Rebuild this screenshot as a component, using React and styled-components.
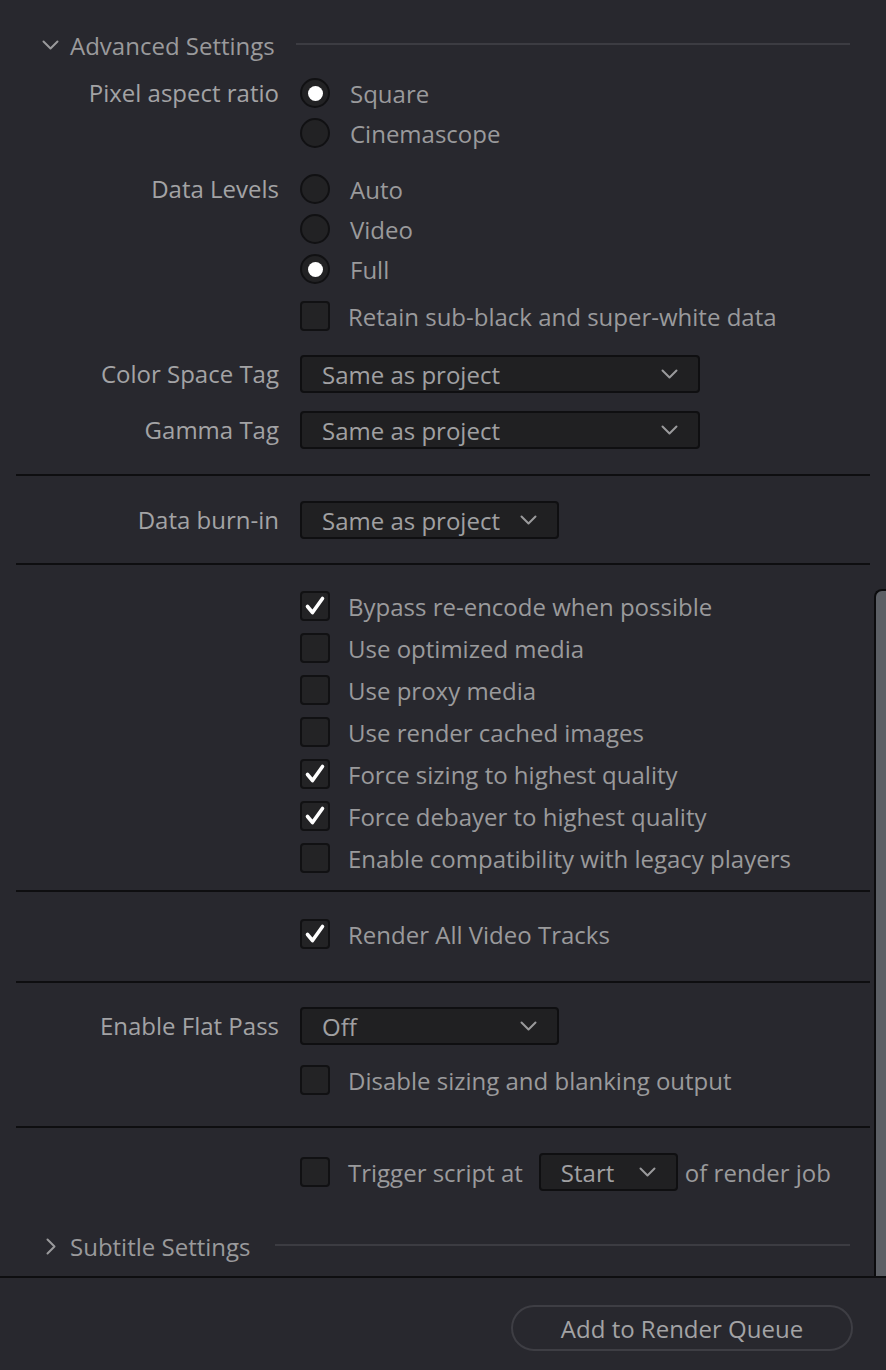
import React from "react";
import styled, { createGlobalStyle } from "styled-components";

const Global = createGlobalStyle`
  html, body { margin: 0; padding: 0; background: #28282e; }
  body { font-family: "Open Sans", "Noto Sans", sans-serif; }
  * { box-sizing: border-box; }
`;

const Page = styled.div`
  width: 886px;
  height: 1370px;
  background: #28282e;
  display: flex;
  flex-direction: column;
  overflow: hidden;
  color: #9d9d9f;
  font-size: 24px;
`;

const Panel = styled.div`
  position: relative;
  height: 1276px;
  padding: 25px 16px 10px 16px;
  display: flex;
  flex-direction: column;
`;

const ScrollThumb = styled.div`
  position: absolute;
  left: 874px;
  top: 589px;
  width: 20px;
  bottom: 0;
  background: #5c5f65;
  border-left: 2px solid #0c0c0e;
  border-top: 2px solid #0c0c0e;
  border-top-left-radius: 8px;
`;

const SectionHeader = styled.div`
  display: flex;
  align-items: center;
  height: 40px;
  margin-top: ${(p) => p.$mt || 0}px;
  padding-left: ${(p) => p.$pl}px;
  padding-right: 20px;
  gap: ${(p) => p.$gap || 12}px;
`;

const HeaderTitle = styled.span`
  color: #9a9a9c;
  white-space: nowrap;
`;

const HeaderLine = styled.div`
  flex: 1;
  height: 2px;
  background: #3c3c42;
  margin-left: ${(p) => p.$ml}px;
  margin-top: -2px;
`;

const Row = styled.div`
  display: grid;
  grid-template-columns: 263px 1fr;
  column-gap: 21px;
  align-items: start;
  margin-top: ${(p) => p.$mt || 0}px;
`;

const Label = styled.div`
  text-align: right;
  color: #a3a3a5;
  white-space: nowrap;
  height: ${(p) => p.$h || 40}px;
  line-height: ${(p) => p.$h || 40}px;
`;

const Controls = styled.div`
  display: flex;
  flex-direction: column;
`;

const OptionRow = styled.div`
  display: flex;
  align-items: center;
  height: ${(p) => p.$h || 40}px;
  gap: ${(p) => p.$gap || 18}px;
  margin-top: ${(p) => p.$mt || 0}px;
  white-space: nowrap;
`;

const OptionText = styled.span`
  color: #9a9a9c;
  margin-left: ${(p) => p.$ml || 0}px;
  margin-right: ${(p) => p.$mr || 0}px;
`;

const RadioOuter = styled.span`
  width: 30px;
  height: 30px;
  border-radius: 50%;
  background: #222224;
  border: 2px solid #111113;
  display: flex;
  align-items: center;
  justify-content: center;
  flex: none;
`;

const RadioDot = styled.span`
  width: 15px;
  height: 15px;
  border-radius: 50%;
  background: #ffffff;
`;

const Box = styled.span`
  width: 30px;
  height: 30px;
  border-radius: 4px;
  background: #232325;
  border: 2px solid #111113;
  display: flex;
  align-items: center;
  justify-content: center;
  flex: none;
`;

const SelectBox = styled.div`
  width: ${(p) => p.$w}px;
  height: 38px;
  background: #202022;
  border: 2px solid #0f0f11;
  border-radius: 4px;
  display: flex;
  align-items: center;
  justify-content: space-between;
  padding: 0 ${(p) => p.$pr || 20}px 0 20px;
  color: #a0a0a2;
  flex: none;
`;

const SelectText = styled.span`
  white-space: nowrap;
`;

const Divider = styled.div`
  height: 2px;
  background: #0e0e10;
  margin-top: ${(p) => p.$mt || 0}px;
`;

const Inline = styled.div`
  display: flex;
  align-items: center;
  height: 38px;
  white-space: nowrap;
`;

const Footer = styled.div`
  flex: 1;
  border-top: 2px solid #0e0e10;
  display: flex;
  justify-content: flex-end;
  align-items: flex-start;
  padding: 27px 33px 0 0;
`;

const QueueButton = styled.button`
  width: 342px;
  height: 46px;
  border-radius: 23px;
  border: 2px solid #3e3e44;
  background: transparent;
  color: #a3a3a5;
  font-family: inherit;
  font-size: 24px;
  padding: 0;
`;

const Check = () => (
  <svg width="22" height="22" viewBox="0 0 22 22">
    <path d="M3.5 11.5 L8.5 17.5 L18.5 3.5" fill="none" stroke="#fff" strokeWidth="3.6" strokeLinecap="round" strokeLinejoin="round" />
  </svg>
);

const ChevronDown = ({ color = "#9a9a9c", w = 17 }) => (
  <svg width={w} height="10" viewBox="0 0 17 10">
    <path d="M1.5 1.5 L8.5 8.5 L15.5 1.5" fill="none" stroke={color} strokeWidth="2" strokeLinecap="round" strokeLinejoin="round" />
  </svg>
);

const ChevronRight = () => (
  <svg width="10" height="17" viewBox="0 0 10 17">
    <path d="M1.5 1.5 L8.5 8.5 L1.5 15.5" fill="none" stroke="#9a9a9c" strokeWidth="2" strokeLinecap="round" strokeLinejoin="round" />
  </svg>
);

const Radio = ({ on, children }) => (
  <OptionRow $gap={20}>
    <RadioOuter>{on && <RadioDot />}</RadioOuter>
    <OptionText>{children}</OptionText>
  </OptionRow>
);

const CheckItem = ({ on, children, h = 42, mt }) => (
  <OptionRow $h={h} $gap={18} $mt={mt}>
    <Box>{on && <Check />}</Box>
    <OptionText>{children}</OptionText>
  </OptionRow>
);

const Select = ({ w, value, pr }) => (
  <SelectBox $w={w} $pr={pr}>
    <SelectText>{value}</SelectText>
    <ChevronDown />
  </SelectBox>
);

const renderChecks = [
  ["Bypass re-encode when possible", true],
  ["Use optimized media", false],
  ["Use proxy media", false],
  ["Use render cached images", false],
  ["Force sizing to highest quality", true],
  ["Force debayer to highest quality", true],
  ["Enable compatibility with legacy players", false],
];

export default function App() {
  return (
    <Page>
      <Global />
      <Panel>
        <SectionHeader $pl={26} $gap={11}>
          <ChevronDown w={17} />
          <HeaderTitle>Advanced Settings</HeaderTitle>
          <HeaderLine $ml={10} />
        </SectionHeader>

        <Row $mt={8}>
          <Label>Pixel aspect ratio</Label>
          <Controls>
            <Radio on>Square</Radio>
            <Radio>Cinemascope</Radio>
          </Controls>
        </Row>

        <Row $mt={16}>
          <Label>Data Levels</Label>
          <Controls>
            <Radio>Auto</Radio>
            <Radio>Video</Radio>
            <Radio on>Full</Radio>
            <CheckItem h={40} mt={7}>Retain sub-black and super-white data</CheckItem>
          </Controls>
        </Row>

        <Row $mt={19}>
          <Label $h={38}>Color Space Tag</Label>
          <Select w={400} value="Same as project" />
        </Row>

        <Row $mt={18}>
          <Label $h={38}>Gamma Tag</Label>
          <Select w={400} value="Same as project" />
        </Row>

        <Divider $mt={25} />

        <Row $mt={25}>
          <Label $h={38}>Data burn-in</Label>
          <Select w={259} value="Same as project" pr={20} />
        </Row>

        <Divider $mt={24} />

        <Row $mt={20}>
          <div />
          <Controls>
            {renderChecks.map(([t, on]) => (
              <CheckItem key={t} on={on}>{t}</CheckItem>
            ))}
          </Controls>
        </Row>

        <Divider $mt={11} />

        <Row $mt={21}>
          <div />
          <Controls>
            <CheckItem on>Render All Video Tracks</CheckItem>
          </Controls>
        </Row>

        <Divider $mt={26} />

        <Row $mt={24}>
          <Label $h={38}>Enable Flat Pass</Label>
          <Controls>
            <Select w={259} value="Off" />
            <CheckItem h={40} mt={15}>Disable sizing and blanking output</CheckItem>
          </Controls>
        </Row>

        <Divider $mt={26} />

        <Row $mt={25}>
          <div />
          <Inline>
            <Box />
            <OptionText $ml={18} $mr={16}>Trigger script at</OptionText>
            <Select w={139} value="Start" pr={20} />
            <OptionText $ml={7}>of render job</OptionText>
          </Inline>
        </Row>

        <SectionHeader $pl={30} $mt={35} $gap={14}>
          <ChevronRight />
          <HeaderTitle>Subtitle Settings</HeaderTitle>
          <HeaderLine $ml={10} />
        </SectionHeader>

        <ScrollThumb />
      </Panel>
      <Footer>
        <QueueButton>Add to Render Queue</QueueButton>
      </Footer>
    </Page>
  );
}
